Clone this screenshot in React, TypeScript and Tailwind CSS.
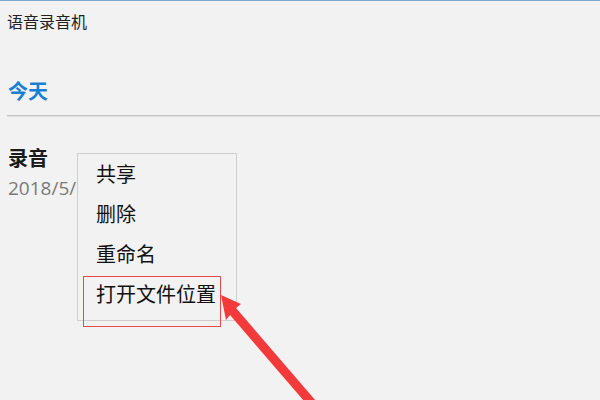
export default function App() {
  const cjk = { fontFamily: '"Noto Sans CJK SC", "Noto Sans", sans-serif' };
  const items = ["共享", "删除", "重命名", "打开文件位置"];
  return (
    <div
      className="relative w-[600px] h-[400px] overflow-hidden bg-[#f2f2f2] border-t border-[#7aa7d0]"
      style={cjk}
    >
      <div className="pl-[7px] pt-[12px] text-[16px] leading-[16px] text-[#222]">语音录音机</div>
      <div className="pl-[8px] mt-[51px] text-[20px] leading-[22px] font-bold text-[#1a7fd4]">今天</div>
      <div className="ml-[7px] mt-[13px] h-px bg-[#c4c4c4]" />
      <div className="ml-[7px] h-px bg-[#e0e0e0]" />
      <div className="pl-[8px] mt-[29px] text-[20px] leading-[24px] font-bold text-[#1a1a1a]">录音</div>
      <div
        className="pl-[8px] mt-[6px] text-[19px] leading-[24px] text-[#7a7a7a]"
        style={{ fontFamily: '"Open Sans", "Noto Sans", sans-serif' }}
      >
        2018/5/5
      </div>

      {/* context menu */}
      <div className="absolute left-[77px] top-[152px] w-[160px] border border-[#cfcfcf] bg-[#f2f2f2] pb-[6px]">
        {items.map((t) => (
          <div key={t} className="pl-[18px] text-[20px] leading-[40px] text-[#111]">
            {t}
          </div>
        ))}
      </div>

      {/* highlight box */}
      <div className="absolute left-[83px] top-[275px] w-[138px] h-[51px] border border-[#e84a4a]" />

      {/* arrow */}
      <svg className="absolute left-0 top-0" width="600" height="400" viewBox="0 0 600 400">
        <polygon
          points="221,294 241,303 236,307 316,400 304,400 230,314 226,319"
          fill="#f23a3a"
        />
      </svg>
    </div>
  );
}
